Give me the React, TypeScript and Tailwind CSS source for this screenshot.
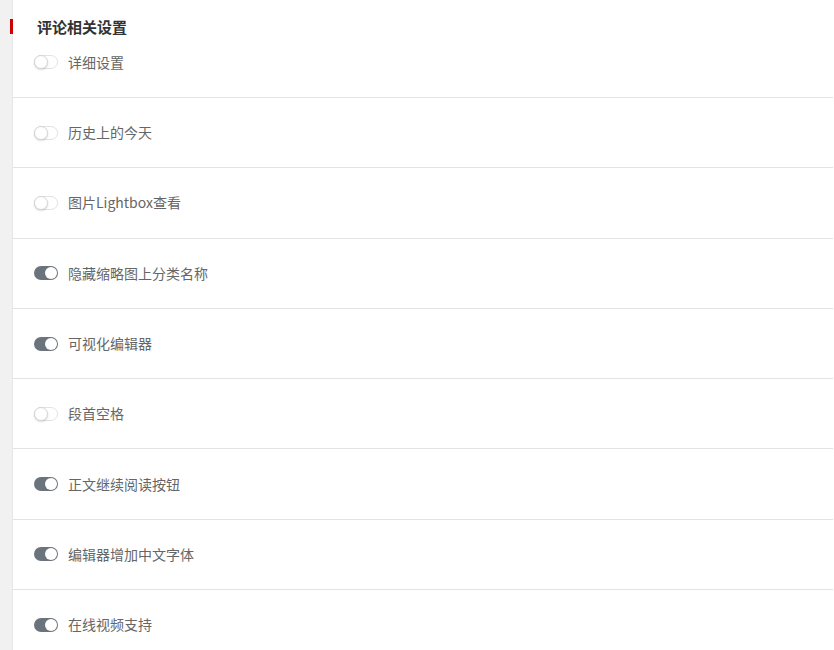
import React from "react";

interface SettingItem {
  label: string;
  on: boolean;
}

const items: SettingItem[] = [
  { label: "详细设置", on: false },
  { label: "历史上的今天", on: false },
  { label: "图片Lightbox查看", on: false },
  { label: "隐藏缩略图上分类名称", on: true },
  { label: "可视化编辑器", on: true },
  { label: "段首空格", on: false },
  { label: "正文继续阅读按钮", on: true },
  { label: "编辑器增加中文字体", on: true },
  { label: "在线视频支持", on: true },
];

const Toggle = ({ on }: { on: boolean }) => {
  if (on) {
    return (
      <div className="w-[24px] h-[14px] rounded-full bg-[#6b737c] flex items-center justify-end pr-px">
        <div className="w-[12px] h-[12px] rounded-full bg-white" />
      </div>
    );
  }
  return (
    <div className="w-[24px] h-[14px] rounded-full bg-white border border-[#e3e3e3] flex items-center">
      <div className="w-[14px] h-[14px] -ml-px rounded-full bg-white border border-[#d6d6d6] shadow-[0_1px_2px_rgba(0,0,0,0.15)]" />
    </div>
  );
};

const App = () => {
  return (
    <div
      className="flex h-[650px] overflow-hidden bg-white"
      style={{ fontFamily: '"Noto Sans CJK SC", "Noto Sans", sans-serif' }}
    >
      <div className="w-[12px] shrink-0 bg-[#f1f1f1] border-r border-[#e6e6e6] box-content" />
      <div className="flex-1 pr-px">
        <div className="pt-[17px] flex">
          <div className="w-[3px] h-[15px] mt-[2px] -ml-[3px] bg-[#cc0000]" />
          <div className="pl-[24px] text-[15px] leading-[20px] font-bold text-[#333]">
            评论相关设置
          </div>
        </div>
        {items.map((item, i) => (
          <div
            key={item.label}
            className={
              i === 0
                ? "h-[61px] pb-[10px] flex items-center gap-[10px] pl-[21px] border-b border-[#e3e3e3]"
                : "h-[70.3px] flex items-center gap-[10px] pl-[21px] border-b border-[#e3e3e3]"
            }
          >
            <Toggle on={item.on} />
            <span className="text-[14px] text-[#666]">{item.label}</span>
          </div>
        ))}
      </div>
    </div>
  );
};

export default App;
